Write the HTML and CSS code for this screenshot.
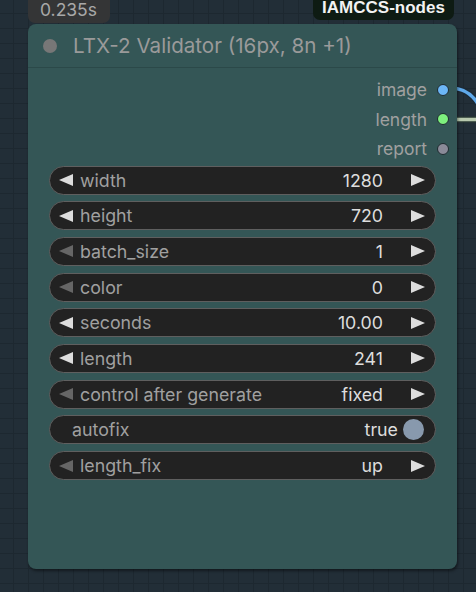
FILE: index.html
```html
<!DOCTYPE html>
<html>
<head>
<meta charset="utf-8">
<link rel="stylesheet" href="styles.css">
</head>
<body>
<div class="canvas">
  <svg class="links" width="476" height="592" viewBox="0 0 476 592">
    <path d="M450 88 C 462 88, 472 94, 478 104" fill="none" stroke="#1b2a36" stroke-width="6"/>
    <path d="M450 88 C 462 88, 472 94, 478 104" fill="none" stroke="#5fa8e8" stroke-width="3.5"/>
    <line x1="450" y1="119.5" x2="476" y2="119.5" stroke="#2a3a34" stroke-width="6"/>
    <line x1="450" y1="119.5" x2="476" y2="119.5" stroke="#b8c9ae" stroke-width="3.5"/>
  </svg>
  <div class="badge time">0.235s</div>
  <div class="badge pack">IAMCCS-nodes</div>
  <div class="node">
    <div class="title">
      <span class="title-dot"></span>
      <span class="title-text">LTX-2 Validator (16px, 8n +1)</span>
    </div>
    <div class="outputs">
      <div class="out"><span>image</span><i class="slot blue"></i></div>
      <div class="out"><span>length</span><i class="slot green"></i></div>
      <div class="out"><span>report</span><i class="slot gray"></i></div>
    </div>
    <div class="widgets">
      <div class="w"><i class="al"></i><span class="lbl">width</span><span class="val">1280</span><i class="ar"></i></div>
      <div class="w"><i class="al"></i><span class="lbl">height</span><span class="val">720</span><i class="ar"></i></div>
      <div class="w"><i class="al dim"></i><span class="lbl">batch_size</span><span class="val">1</span><i class="ar"></i></div>
      <div class="w"><i class="al dim"></i><span class="lbl">color</span><span class="val">0</span><i class="ar"></i></div>
      <div class="w"><i class="al"></i><span class="lbl">seconds</span><span class="val">10.00</span><i class="ar"></i></div>
      <div class="w"><i class="al"></i><span class="lbl">length</span><span class="val">241</span><i class="ar"></i></div>
      <div class="w"><i class="al dim"></i><span class="lbl">control after generate</span><span class="val">fixed</span><i class="ar"></i></div>
      <div class="w toggle"><span class="lbl">autofix</span><span class="val">true</span><i class="knob"></i></div>
      <div class="w"><i class="al dim"></i><span class="lbl">length_fix</span><span class="val">up</span><i class="ar"></i></div>
    </div>
  </div>
</div>
</body>
</html>
```

FILE: styles.css
```css
html, body {
  margin: 0;
  padding: 0;
}
body {
  width: 476px;
  height: 592px;
  overflow: hidden;
  font-family: Inter, "Liberation Sans", sans-serif;
  background-color: #222e37;
  background-image:
    linear-gradient(to right, #1d2830 1px, transparent 1px),
    linear-gradient(to bottom, #1d2830 1px, transparent 1px);
  background-size: 15px 15px;
  background-position: 13px 13px;
}
.canvas {
  position: relative;
  width: 476px;
  height: 592px;
}
.links {
  position: absolute;
  left: 0;
  top: 0;
}
.badge {
  position: absolute;
  top: 0;
  box-sizing: border-box;
}
.time {
  left: 28px;
  width: 82px;
  height: 23px;
  padding-left: 12px;
  background: #343536;
  color: #a8a8a8;
  border-radius: 0 0 7px 7px;
  font-size: 17.5px;
  line-height: 19px;
}
.pack {
  left: 313px;
  width: 141px;
  height: 20px;
  background: #0e1b13;
  color: #f2f2f2;
  font-family: "Liberation Sans", Arial, sans-serif;
  font-weight: bold;
  font-size: 17px;
  text-align: center;
  line-height: 16px;
  padding-top: 0;
  border-radius: 0 0 7px 7px;
}
.node {
  position: absolute;
  left: 28px;
  top: 24px;
  width: 429px;
  height: 545px;
  background: #345656;
  border-radius: 8px;
  box-shadow: 1px 2px 3px rgba(0,0,0,0.45);
  display: flex;
  flex-direction: column;
}
.title {
  height: 43px;
  border-bottom: 1px solid #2b4949;
  display: flex;
  align-items: center;
  padding-left: 15px;
  gap: 16px;
}
.title-dot {
  width: 14px;
  height: 14px;
  border-radius: 50%;
  background: #777777;
}
.title-text {
  color: #9a9a9a;
  font-size: 20.6px;
}
.outputs {
  padding-top: 7px;
  display: flex;
  flex-direction: column;
  align-items: flex-end;
  padding-right: 8px;
}
.out {
  height: 29.5px;
  display: flex;
  align-items: center;
  gap: 10px;
  color: #a0a0a0;
  font-size: 17.5px;
}
.slot {
  width: 10px;
  height: 10px;
  border-radius: 50%;
  border: 1.5px solid #1e2b30;
}
.slot.blue { background: #6cb6f6; }
.slot.green { background: #7ef07e; }
.slot.gray { background: #8a8a98; }
.widgets {
  margin-top: 2px;
  padding: 0 21px 0 21px;
  display: flex;
  flex-direction: column;
  gap: 6.7px;
}
.w {
  height: 29px;
  box-sizing: border-box;
  border: 1.5px solid #5f5f5f;
  border-radius: 15px;
  background: #222222;
  display: flex;
  align-items: center;
  padding: 0 10px 0 9px;
  font-size: 17.8px;
}
.lbl {
  color: #a0a0a0;
  flex: 1;
  margin-left: 7px;
  white-space: nowrap;
}
.val {
  color: #dddddd;
  margin-right: 28px;
}
.al {
  width: 0;
  height: 0;
  border-top: 6px solid transparent;
  border-bottom: 6px solid transparent;
  border-right: 14px solid #dddddd;
}
.al.dim { border-right-color: #666666; }
.ar {
  width: 0;
  height: 0;
  border-top: 6px solid transparent;
  border-bottom: 6px solid transparent;
  border-left: 14px solid #dddddd;
}
.toggle { padding-left: 22px; padding-right: 11px; }
.toggle .lbl { margin-left: 0; }
.toggle .val { margin-right: 5px; }
.knob {
  width: 21px;
  height: 21px;
  border-radius: 50%;
  background: #8899ad;
}
```
